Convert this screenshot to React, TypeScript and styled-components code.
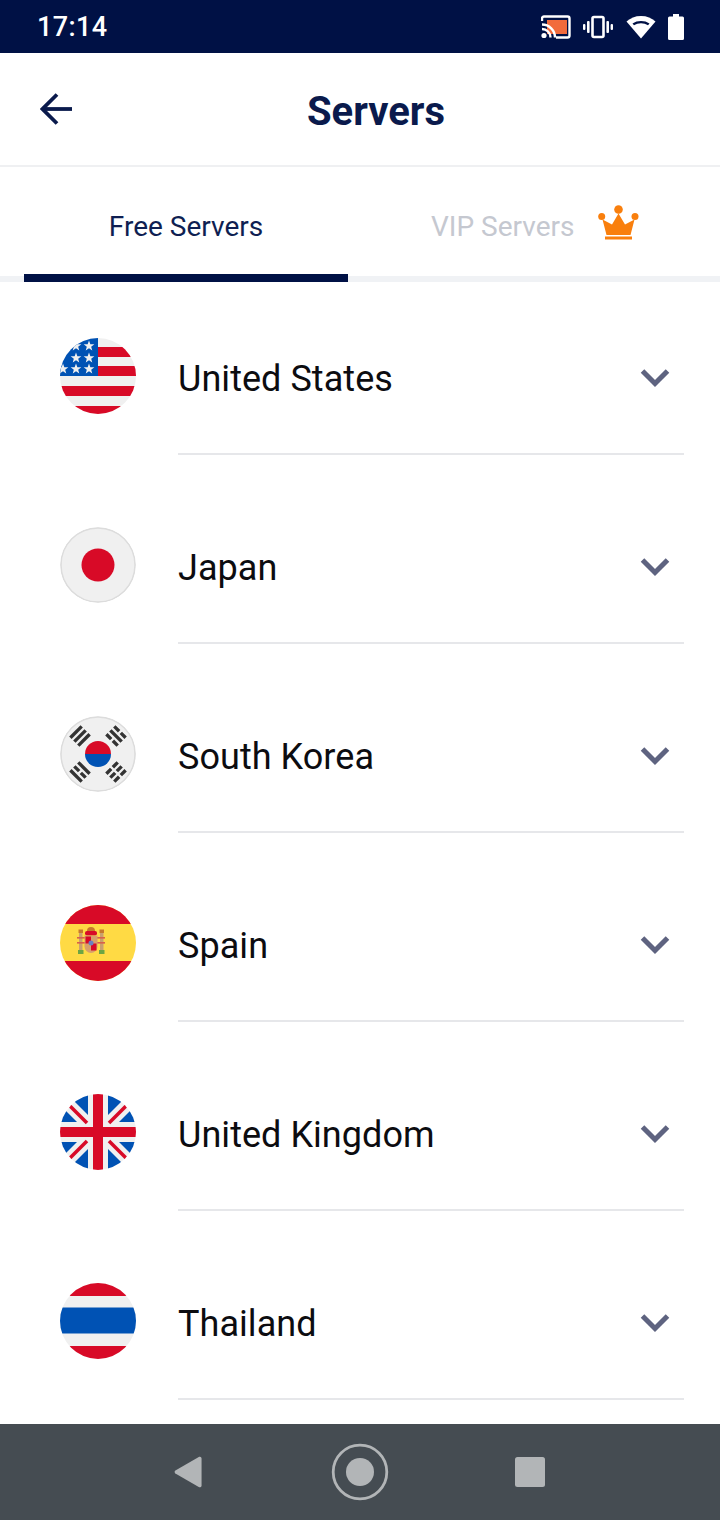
import React from "react";
import styled, { createGlobalStyle } from "styled-components";
import { ReactNode } from "react";

const GlobalStyle = createGlobalStyle`
  html, body {
    margin: 0;
    padding: 0;
    background: #ffffff;
  }
  * {
    box-sizing: border-box;
  }
`;

const Page = styled.div`
  width: 720px;
  height: 1520px;
  display: flex;
  flex-direction: column;
  overflow: hidden;
  font-family: Roboto, "Liberation Sans", sans-serif;
  background: #ffffff;
`;

const StatusBar = styled.div`
  height: 53px;
  flex-shrink: 0;
  display: flex;
  align-items: center;
  justify-content: space-between;
  padding: 0 36px 0 37px;
  background: #001145;
`;

const Clock = styled.span`
  color: #ffffff;
  font-size: 27px;
  font-weight: 500;
  letter-spacing: 0.4px;
`;

const StatusIcons = styled.div`
  display: flex;
  align-items: center;
  gap: 12.5px;
`;

const Header = styled.header`
  height: 114px;
  flex-shrink: 0;
  display: flex;
  align-items: center;
  padding: 0 40px;
  border-bottom: 2px solid #eff0f2;
`;

const Title = styled.h1`
  flex: 1;
  margin: 0;
  padding-top: 5px;
  text-align: center;
  color: #0a1a4c;
  font-size: 40px;
  font-weight: 700;
`;

const Tabs = styled.nav`
  height: 115px;
  flex-shrink: 0;
  display: grid;
  grid-template-columns: 324px 1fr;
  padding: 0 24px;
  border-bottom: 6px solid #f0f2f5;
`;

const Tab = styled.div<{ $active?: boolean }>`
  position: relative;
  display: flex;
  align-items: center;
  justify-content: ${(p) => (p.$active ? "center" : "flex-start")};
  gap: 24px;
  padding-top: 10px;
  padding-left: ${(p) => (p.$active ? "0" : "83px")};
  color: ${(p) => (p.$active ? "#0f1f52" : "#c5c8d0")};
  font-size: 28px;

  ${(p) =>
    p.$active &&
    `
    &::after {
      content: "";
      position: absolute;
      left: 0;
      right: 0;
      bottom: -6px;
      height: 8px;
      background: #001145;
    }
  `}
`;

const Crown = styled.svg`
  margin-bottom: 8px;
`;

const List = styled.main`
  flex: 1;
  overflow: hidden;
`;

const Row = styled.div`
  height: 173px;
  margin-top: 16px;
  display: flex;
  padding: 40px 36px 0 60px;
  gap: 42px;
`;

const FlagWrap = styled.div`
  width: 76px;
  height: 76px;
  flex-shrink: 0;
`;

const RowBody = styled.div`
  flex: 1;
  height: 117px;
  display: flex;
  align-items: flex-start;
  justify-content: space-between;
  border-bottom: 2px solid #e6e7ea;
`;

const Name = styled.span`
  margin-top: 19px;
  color: #0c0c10;
  font-size: 36px;
  line-height: 44px;
  letter-spacing: 0.05px;
`;

const Chevron = styled.svg`
  margin: 30px 14px 0 0;
`;

const NavBar = styled.div`
  height: 96px;
  flex-shrink: 0;
  display: flex;
  align-items: center;
  justify-content: center;
  background: #454c52;
`;

const NavButton = styled.div`
  width: 170px;
  display: flex;
  justify-content: center;
`;

const NavBack = styled.svg`
  margin-right: 4px;
`;

const BackArrow = () => (
  <svg width="32" height="32" viewBox="0 0 32 32" fill="none" stroke="#0a1a4c" strokeWidth="3.800">
    <path d="M32 16H3" />
    <path d="M17 1.500L2.500 16 17 30.500" />
  </svg>
);

const CastIcon = () => (
  <svg width="30" height="24" viewBox="0 0 30 24">
    <rect x="6" y="5" width="20" height="14" fill="#f26b3c" />
    <path d="M1 6V3.500A2 2 0 0 1 3 1.500h23.500a2 2 0 0 1 2 2v17a2 2 0 0 1-2 2H15" fill="none" stroke="#fff" strokeWidth="2.400" />
    <path d="M1 9.500a13 13 0 0 1 13 13M1 14a8.500 8.500 0 0 1 8.500 8.500" fill="none" stroke="#fff" strokeWidth="2.400" />
    <circle cx="3" cy="20.500" r="2.600" fill="#fff" />
  </svg>
);

const VibrateIcon = () => (
  <svg width="30" height="24" viewBox="0 0 30 24" fill="#fff">
    <rect x="9.500" y="2" width="11" height="20" rx="1.500" fill="none" stroke="#fff" strokeWidth="2.600" />
    <rect x="4" y="6" width="2.600" height="12" rx="1" />
    <rect x="23.400" y="6" width="2.600" height="12" rx="1" />
    <rect x="0" y="9" width="2.400" height="6" rx="1" />
    <rect x="27.600" y="9" width="2.400" height="6" rx="1" />
  </svg>
);

const WifiIcon = () => (
  <svg width="30" height="24" viewBox="0 0 30 24" fill="#fff">
    <path d="M15 1C9 1 4.500 3 .5 6.500L15 23.500 29.500 6.500C25.500 3 21 1 15 1z" />
    <path d="M6.500 8.500C9 6.800 11.800 6 15 6s6 .8 8.500 2.500l-1.500 1.700C20 9 17.500 8.200 15 8.200s-5 .8-7 2z" fill="#001145" />
  </svg>
);

const BatteryIcon = () => (
  <svg width="16" height="26" viewBox="0 0 16 26" fill="#fff">
    <path d="M5 0h6v2.500h3.500A1.500 1.500 0 0 1 16 4v20.500a1.500 1.500 0 0 1-1.500 1.500h-13A1.500 1.500 0 0 1 0 24.500V4a1.500 1.500 0 0 1 1.500-1.500H5z" />
  </svg>
);

const CrownIcon = () => (
  <Crown width="41" height="35" viewBox="0 0 41 35" fill="#f97f0d">
    <circle cx="20.500" cy="4.500" r="4.300" />
    <circle cx="3.700" cy="11.500" r="3.500" />
    <circle cx="37" cy="11.500" r="3.500" />
    <path d="M20.500 8.500L27 19.500 36.500 14.500 32.500 30H8.500L4.500 14.500 14 19.500z" />
    <rect x="7" y="31.500" width="27" height="3" />
  </Crown>
);

const ChevronDown = () => (
  <Chevron width="30" height="20" viewBox="0 0 30 20" fill="none" stroke="#5e6380" strokeWidth="5">
    <path d="M2.500 3L15 15.500 27.500 3" />
  </Chevron>
);

const Disc = ({ id, children }: { id: string; children: ReactNode }) => (
  <svg width="76" height="76" viewBox="0 0 76 76">
    <defs>
      <clipPath id={id}>
        <circle cx="38" cy="38" r="38" />
      </clipPath>
    </defs>
    <g clipPath={`url(#${id})`}>{children}</g>
  </svg>
);

const star = (cx: number, cy: number) => {
  const pts: string[] = [];
  for (let i = 0; i < 10; i++) {
    const r = i % 2 === 0 ? 5.600 : 2.300;
    const a = (Math.PI / 5) * i - Math.PI / 2;
    pts.push(`${cx + r * Math.cos(a)},${cy + r * Math.sin(a)}`);
  }
  return <polygon key={`${cx}-${cy}`} points={pts.join(" ")} fill="#f0f0f0" />;
};

const UsFlag = () => (
  <Disc id="us">
    <rect width="76" height="76" fill="#f0f0f0" />
    <rect x="38" y="9" width="38" height="10" fill="#d80a27" />
    <rect x="38" y="28" width="38" height="10" fill="#d80a27" />
    <rect y="48" width="76" height="10" fill="#d80a27" />
    <rect y="68" width="76" height="8" fill="#d80a27" />
    <rect width="38" height="38" fill="#0052b4" />
    {[
      [16, 8],
      [29, 8],
      [16, 20],
      [29, 20],
      [3, 31],
      [16, 31],
      [29, 31],
    ].map(([x, y]) => star(x, y))}
  </Disc>
);

const JapanFlag = () => (
  <Disc id="jp">
    <circle cx="38" cy="38" r="38" fill="#f0f0f0" />
    <circle cx="38" cy="38" r="37" fill="none" stroke="#dcdcdc" strokeWidth="1.500" />
    <circle cx="38" cy="38" r="16.500" fill="#d80a27" />
  </Disc>
);

// one of the taegeuk trigrams, bars marked false have a gap in the middle
const Trigram = ({ x, y, angle, bars }: { x: number; y: number; angle: number; bars: boolean[] }) => (
  <g transform={`translate(${x} ${y}) rotate(${angle})`} stroke="#333333" strokeWidth="3.400">
    {bars.map((solid, i) => {
      const dy = (i - 1) * 5.600;
      return solid ? (
        <path key={i} d={`M-8 ${dy}H8`} />
      ) : (
        <path key={i} d={`M-8 ${dy}H-1.200M1.200 ${dy}H8`} />
      );
    })}
  </g>
);

const KoreaFlag = () => (
  <Disc id="kr">
    <circle cx="38" cy="38" r="38" fill="#f0f0f0" />
    <circle cx="38" cy="38" r="37" fill="none" stroke="#dcdcdc" strokeWidth="1.500" />
    <path d="M25 38a13 13 0 0 1 26 0z" fill="#d80a27" />
    <path d="M25 38a13 13 0 0 0 26 0z" fill="#0052b4" />
    <Trigram x={20} y={20} angle={-45} bars={[true, true, true]} />
    <Trigram x={56} y={20} angle={45} bars={[false, true, false]} />
    <Trigram x={20} y={56} angle={45} bars={[true, false, true]} />
    <Trigram x={56} y={56} angle={-45} bars={[false, false, false]} />
  </Disc>
);

const SpainFlag = () => (
  <Disc id="es">
    <rect width="76" height="76" fill="#ffda44" />
    <rect width="76" height="19" fill="#d80a27" />
    <rect y="56" width="76" height="20" fill="#d80a27" />
    <rect x="19" y="28" width="3.500" height="17" fill="#c9a06e" />
    <rect x="40" y="28" width="3.500" height="17" fill="#c9a06e" />
    <rect x="18.500" y="24.500" width="4.500" height="3.500" fill="#c8782c" />
    <rect x="39.500" y="24.500" width="4.500" height="3.500" fill="#c8782c" />
    <rect x="18" y="45" width="5.500" height="4" fill="#6da544" />
    <rect x="39" y="45" width="5.500" height="4" fill="#6da544" />
    <rect x="17" y="32" width="28" height="1.600" fill="#d8614a" />
    <rect x="17" y="37" width="28" height="1.600" fill="#d8614a" />
    <rect x="25" y="26" width="12" height="4.500" rx="2" fill="#d80a27" />
    <path d="M27 26a4 4 0 0 1 8 0z" fill="#c8782c" />
    <path d="M24.500 30.500h13v11a6.500 6.500 0 0 1-13 0z" fill="#d8a06a" />
    <rect x="25.500" y="31.500" width="5.500" height="7" fill="#d80a27" />
    <rect x="31" y="38.500" width="5.500" height="7" fill="#d80a27" />
    <circle cx="31" cy="38" r="2.500" fill="#6a7fc0" />
  </Disc>
);

// the top left corner of the union jack, mirrored for the other three
const UkCorner = ({ transform }: { transform?: string }) => (
  <g transform={transform}>
    <path d="M28 0V21L12 5V0z" fill="#0052b4" />
    <path d="M0 11L17 28H0z" fill="#0052b4" />
    <path d="M9.500 11.500L27 29" stroke="#d80a27" strokeWidth="3.600" />
  </g>
);

const UkFlag = () => (
  <Disc id="uk">
    <rect width="76" height="76" fill="#f0f0f0" />
    <UkCorner />
    <UkCorner transform="matrix(-1 0 0 1 76 0)" />
    <UkCorner transform="matrix(1 0 0 -1 0 76)" />
    <UkCorner transform="matrix(-1 0 0 -1 76 76)" />
    <rect x="33" width="10" height="76" fill="#d80a27" />
    <rect y="33" width="76" height="10" fill="#d80a27" />
  </Disc>
);

const ThaiFlag = () => (
  <Disc id="th">
    <rect width="76" height="76" fill="#f0f0f0" />
    <rect width="76" height="13" fill="#d80a27" />
    <rect y="63" width="76" height="13" fill="#d80a27" />
    <rect y="24.500" width="76" height="26" fill="#0052b4" />
  </Disc>
);

const servers = [
  { name: "United States", flag: <UsFlag /> },
  { name: "Japan", flag: <JapanFlag /> },
  { name: "South Korea", flag: <KoreaFlag /> },
  { name: "Spain", flag: <SpainFlag /> },
  { name: "United Kingdom", flag: <UkFlag /> },
  { name: "Thailand", flag: <ThaiFlag /> },
];

export default function App() {
  return (
    <Page>
      <GlobalStyle />
      <StatusBar>
        <Clock>17:14</Clock>
        <StatusIcons>
          <CastIcon />
          <VibrateIcon />
          <WifiIcon />
          <BatteryIcon />
        </StatusIcons>
      </StatusBar>
      <Header>
        <BackArrow />
        <Title>Servers</Title>
      </Header>
      <Tabs>
        <Tab $active>Free Servers</Tab>
        <Tab>
          VIP Servers
          <CrownIcon />
        </Tab>
      </Tabs>
      <List>
        {servers.map((server) => (
          <Row key={server.name}>
            <FlagWrap>{server.flag}</FlagWrap>
            <RowBody>
              <Name>{server.name}</Name>
              <ChevronDown />
            </RowBody>
          </Row>
        ))}
      </List>
      <NavBar>
        <NavButton>
          <NavBack width="28" height="32" viewBox="0 0 30 34" fill="#b2b5b7" preserveAspectRatio="none">
            <path d="M27 .8a2 2 0 0 1 2.500 1.900v28.600a2 2 0 0 1-2.500 1.900L1.500 18.500a1.800 1.800 0 0 1 0-3z" />
          </NavBack>
        </NavButton>
        <NavButton>
          <svg width="58" height="58" viewBox="0 0 58 58">
            <circle cx="29" cy="29" r="26.800" fill="none" stroke="#b2b5b7" strokeWidth="2.800" />
            <circle cx="29" cy="29" r="14" fill="#b2b5b7" />
          </svg>
        </NavButton>
        <NavButton>
          <svg width="30" height="30" viewBox="0 0 30 30">
            <rect width="30" height="30" rx="2.500" fill="#b2b5b7" />
          </svg>
        </NavButton>
      </NavBar>
    </Page>
  );
}
